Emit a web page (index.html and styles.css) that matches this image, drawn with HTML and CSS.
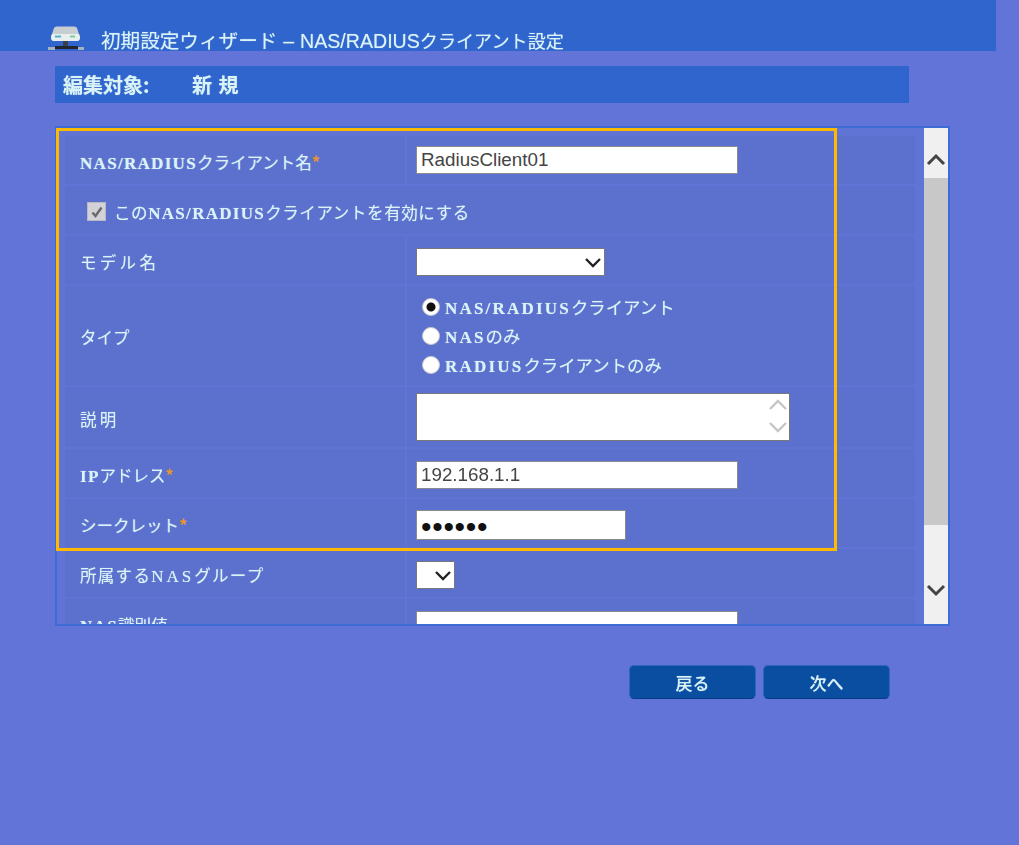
FILE: index.html
```html
<!DOCTYPE html>
<html lang="ja">
<head>
<meta charset="utf-8">
<title>初期設定ウィザード</title>
<link rel="stylesheet" href="styles.css">
</head>
<body>
<div class="page">
  <header class="header">
    <svg class="nas-icon" width="36" height="25" viewBox="0 0 36 25">
      <path d="M6 2Q6.500 0.500 9 0.500H26Q28.500 0.500 29 2L32 11Q32 15 29 15H6Q3 15 3 11Z" fill="#c6ced2"/>
      <path d="M4 8H31L32 11Q32 15 29 15H6Q3 15 3 11Z" fill="#e9efee"/>
      <rect x="7" y="9.500" width="6" height="2" fill="#49b6c8"/>
      <rect x="22" y="9.500" width="5" height="2" fill="#7fce9a"/>
      <rect x="15" y="15" width="5" height="6" fill="#3a3f4a"/>
      <rect x="7" y="20" width="23" height="3" fill="#23262e"/>
      <rect x="0" y="21" width="7" height="3" fill="#a9b0bd"/>
      <rect x="30" y="21" width="6" height="3" fill="#a9b0bd"/>
    </svg>
    <h1 class="title">初期設定ウィザード <span class="title-dash">–</span> <span class="title-lat">NAS/RADIUS</span><span class="title-end">クライアント設定</span></h1>
  </header>

  <div class="target-bar">
    <span class="target-label">編集対象:</span>
    <span class="target-value">新 規</span>
  </div>

  <section class="panel">
    <div class="scroll-area">
      <div class="row">
        <div class="cell cell-label">
          <span><span class="lat">NAS/RADIUS</span>クライアント名<span class="req">*</span></span>
        </div>
        <div class="cell cell-value"><input class="field field-wide" type="text" value="RadiusClient01"></div>
      </div>

      <div class="row row-full">
        <div class="cell cell-check">
          <span class="check">
            <svg width="14" height="14" viewBox="0 0 14 14"><path d="M2.500 7.500L5.500 11L11.500 2.500" fill="none" stroke="#6b6b6b" stroke-width="2.400"/></svg>
          </span>
          <span class="check-text">この<span class="lat">NAS/RADIUS</span>クライアントを有効にする</span>
        </div>
      </div>

      <div class="row">
        <div class="cell cell-label"><span class="spaced-3">モデル名</span></div>
        <div class="cell cell-value cell-shift-sm">
          <div class="select select-model">
            <svg class="chevron" width="18" height="11" viewBox="0 0 18 11"><path d="M2 2L9 9L16 2" fill="none" stroke="#222" stroke-width="2.400"/></svg>
          </div>
        </div>
      </div>

      <div class="row row-type">
        <div class="cell cell-label">タイプ</div>
        <div class="cell cell-value cell-radios">
          <div class="radio-line"><span class="radio radio-on"></span><span><span class="lat">NAS/RADIUS</span>クライアント</span></div>
          <div class="radio-line"><span class="radio"></span><span><span class="lat">NAS</span>のみ</span></div>
          <div class="radio-line"><span class="radio"></span><span><span class="lat">RADIUS</span>クライアントのみ</span></div>
        </div>
      </div>

      <div class="row row-desc">
        <div class="cell cell-label"><span class="spaced-3">説明</span></div>
        <div class="cell cell-value">
          <div class="textarea">
            <svg class="ta-up" width="20" height="13" viewBox="0 0 20 13"><path d="M2 11L10 3L18 11" fill="none" stroke="#c6c6c6" stroke-width="2.400"/></svg>
            <svg class="ta-down" width="20" height="13" viewBox="0 0 20 13"><path d="M2 2L10 10L18 2" fill="none" stroke="#c6c6c6" stroke-width="2.400"/></svg>
          </div>
        </div>
      </div>

      <div class="row">
        <div class="cell cell-label"><span><span class="lat">IP</span>アドレス<span class="req">*</span></span></div>
        <div class="cell cell-value cell-shift"><input class="field field-wide" type="text" value="192.168.1.1"></div>
      </div>

      <div class="row">
        <div class="cell cell-label"><span>シークレット<span class="req">*</span></span></div>
        <div class="cell cell-value cell-shift"><input class="field field-secret" type="password" value="123456"></div>
      </div>

      <div class="row">
        <div class="cell cell-label"><span class="spaced-1">所属する<span class="lat-thin">NAS</span>グループ</span></div>
        <div class="cell cell-value cell-shift">
          <div class="select select-group">
            <svg class="chevron" width="18" height="11" viewBox="0 0 18 11"><path d="M2 2L9 9L16 2" fill="none" stroke="#222" stroke-width="2.400"/></svg>
          </div>
        </div>
      </div>

      <div class="row">
        <div class="cell cell-label"><span><span class="lat">NAS</span>識別値</span></div>
        <div class="cell cell-value cell-shift"><input class="field field-wide" type="text"></div>
      </div>
    </div>

    <div class="scrollbar">
      <div class="sb-btn">
        <svg width="20" height="13" viewBox="0 0 20 13"><path d="M2 11L10 3L18 11" fill="none" stroke="#444" stroke-width="3"/></svg>
      </div>
      <div class="sb-thumb"></div>
      <div class="sb-rest">
        <svg width="20" height="13" viewBox="0 0 20 13"><path d="M2 2L10 10L18 2" fill="none" stroke="#444" stroke-width="3"/></svg>
      </div>
    </div>

    <div class="highlight"></div>
  </section>

  <div class="actions">
    <button class="btn" type="button">戻る</button>
    <button class="btn" type="button">次へ</button>
  </div>
</div>
</body>
</html>
```

FILE: styles.css
```css
* { box-sizing: border-box; }

html, body {
  margin: 0;
  height: 100%;
  background: #6374d8;
  overflow: hidden;
}

.page {
  height: 845px;
  color: #d9f3f6;
  font-family: "Noto Sans CJK JP", "Liberation Sans", sans-serif;
  font-size: 16.500px;
  text-shadow: 0 0 1px rgba(217, 243, 246, 0.6);
  filter: blur(0.6px);
}

.header {
  width: 996px;
  height: 51px;
  background: #3065cd;
  display: flex;
  align-items: flex-end;
  padding-left: 48px;
}

.nas-icon { flex: none; }

.title {
  margin: 0 0 0 17px;
  font-size: 19.600px;
  font-weight: 400;
  line-height: 24px;
  white-space: nowrap;
  position: relative;
  top: 2px;
}

.title-dash {
  font-family: "Liberation Sans", sans-serif;
  margin: 0 1.500px;
}

.title-lat {
  font-family: "Liberation Sans", sans-serif;
}

.title-end { font-size: 18.100px; }

.target-bar {
  margin: 15px 0 0 55px;
  width: 854px;
  height: 37px;
  background: #3065cd;
  display: flex;
  align-items: center;
  padding-left: 8px;
  font-size: 20px;
  font-weight: 700;
}

.target-label { width: 129px; }
.target-value { word-spacing: 2px; }

.panel {
  position: relative;
  margin: 23px 0 0 55px;
  width: 895px;
  height: 500px;
  border: 2px solid #3c6bd3;
  background: #6074d6;
  display: flex;
}

.scroll-area {
  flex: 1;
  min-width: 0;
  height: 100%;
  overflow: hidden;
  padding: 8px 0 0 8px;
  display: flex;
  flex-direction: column;
  gap: 2px;
}

.row {
  flex: none;
  height: 48px;
  width: 850px;
  display: grid;
  grid-template-columns: 340px 1fr;
  gap: 2px;
}

.row-full { grid-template-columns: 1fr; }
.row-type { height: 99px; }
.row-desc { height: 60px; }

.cell {
  background: #5c70ce;
  display: flex;
  align-items: center;
}

.cell-label { padding: 3px 0 0 15px; }
.cell-value { padding-left: 9px; }
.cell-shift { padding-top: 4px; }
.cell-shift-sm { padding-top: 3px; }

.cell-check { padding: 0 0 0 22px; gap: 8px; }
.check-text { letter-spacing: 0.600px; padding-top: 3px; }

.spaced-3 { letter-spacing: 3.300px; }
.spaced-1 { letter-spacing: 1.300px; }

.lat {
  font-family: "Liberation Serif", serif;
  font-weight: 700;
  font-size: 17px;
  letter-spacing: 1.300px;
}

.lat-thin {
  font-family: "Liberation Serif", serif;
  font-size: 17px;
  letter-spacing: 3px;
}

.req {
  color: #e8952e;
  font-weight: 700;
  text-shadow: none;
}

.check {
  width: 19px;
  height: 19px;
  margin-top: 3px;
  background: #d2d2d8;
  border: 1px solid #b9b9c4;
  display: flex;
  align-items: center;
  justify-content: center;
}

.field {
  display: block;
  height: 28px;
  padding: 0 4px;
  background: #fff;
  border: 1px solid #8a8a90;
  border-radius: 1px;
  color: #444;
  font-family: "Liberation Sans", sans-serif;
  font-size: 18.800px;
  outline: none;
}

.field-wide { width: 322px; }

.field-secret {
  width: 210px;
  height: 30px;
  padding-top: 3px;
  font-size: 30px;
  letter-spacing: 0.700px;
  color: #111;
}

.select {
  position: relative;
  height: 28px;
  background: #fff;
  border: 1px solid #77777d;
  border-radius: 1px;
}

.select-model { width: 189px; }
.select-group { width: 39px; }

.chevron {
  position: absolute;
  right: 2px;
  top: 8px;
}

.cell-radios {
  flex-direction: column;
  align-items: flex-start;
  justify-content: center;
  gap: 3px;
  padding-left: 15px;
  font-size: 17.400px;
}

.cell-radios .lat { letter-spacing: 2.200px; }

.radio-line {
  display: flex;
  align-items: center;
  gap: 5px;
  height: 26px;
  white-space: nowrap;
}

.radio {
  flex: none;
  width: 18px;
  height: 18px;
  border-radius: 50%;
  background: #fff;
  border: 1px solid #c9c9c9;
}

.radio-on {
  background: radial-gradient(circle, #111 0 4px, #fff 5px);
}

.textarea {
  position: relative;
  width: 374px;
  height: 48px;
  background: #fff;
  border: 1px solid #77777d;
}

.ta-up { position: absolute; right: 1px; top: 4px; }
.ta-down { position: absolute; right: 1px; top: 27px; }

.scrollbar {
  flex: none;
  width: 24px;
  height: 100%;
  background: #f0f0f0;
  display: flex;
  flex-direction: column;
}

.sb-btn {
  height: 50px;
  display: flex;
  align-items: flex-start;
  justify-content: center;
  padding-top: 25px;
  flex: none;
}

.sb-thumb {
  flex: none;
  height: 347px;
  background: #c8c8c8;
}

.sb-rest {
  flex: 1;
  display: flex;
  align-items: flex-end;
  justify-content: center;
  padding-bottom: 27px;
}

.highlight {
  position: absolute;
  left: -1px;
  top: 0;
  width: 781px;
  height: 423px;
  border: 3px solid #ffb900;
  pointer-events: none;
}

.actions {
  width: 890px;
  margin-top: 39px;
  display: flex;
  justify-content: flex-end;
  gap: 7px;
}

.btn {
  width: 127px;
  height: 34px;
  padding: 0;
  background: #0a4ea2;
  border: 1px solid #2f66c0;
  border-bottom-color: #063c86;
  border-radius: 5px;
  color: #d9f3f6;
  font-family: "Noto Sans CJK JP", sans-serif;
  font-size: 17px;
  font-weight: 500;
  text-shadow: 0 0 1px rgba(217, 243, 246, 0.6);
}
```
